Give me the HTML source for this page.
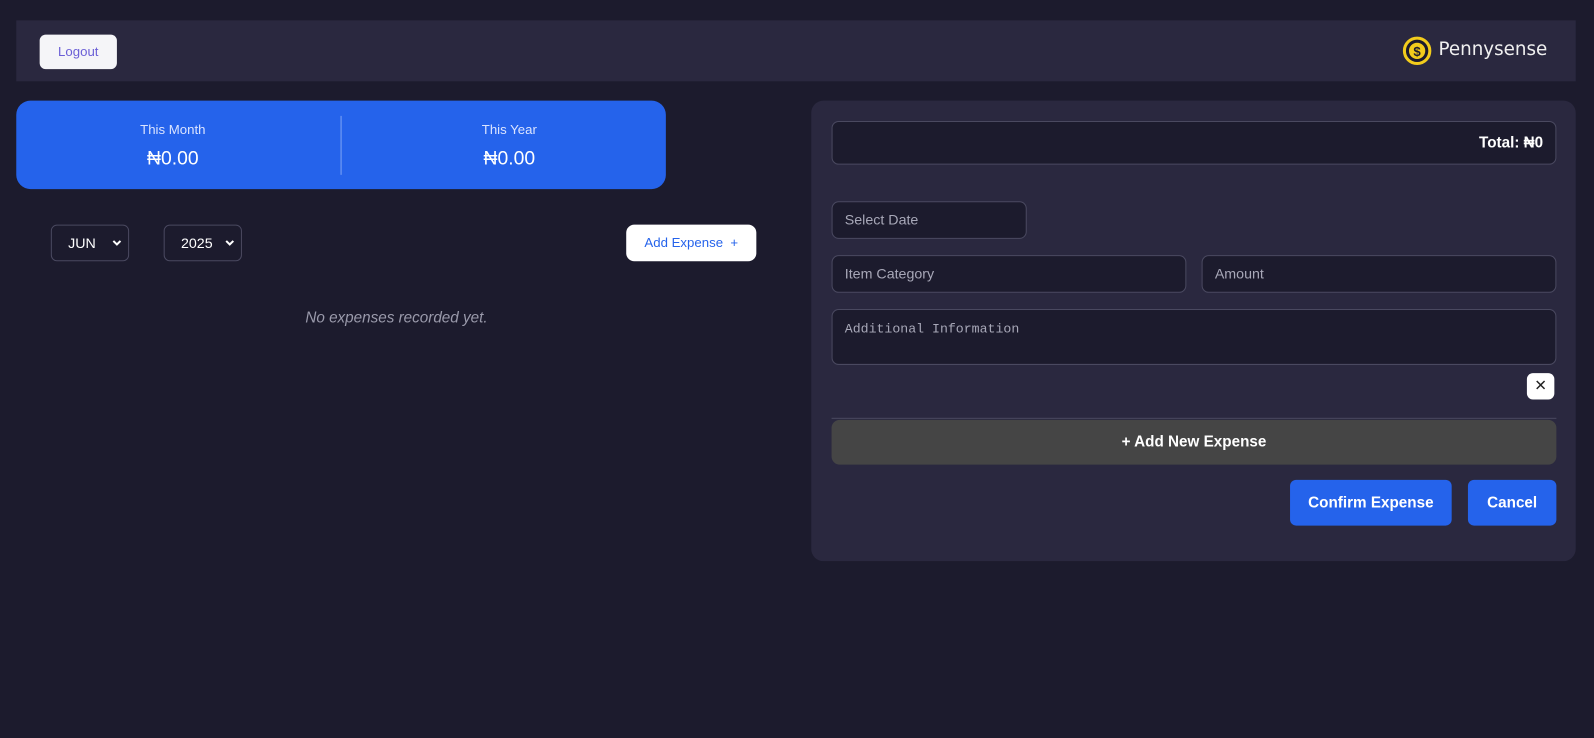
<!DOCTYPE html>
<html><head><meta charset="utf-8"><style>
*{box-sizing:border-box;margin:0;padding:0}
body{width:1594px;height:738px;background:#1c1b2d;font-family:"Liberation Sans","DejaVu Sans",sans-serif;overflow:hidden;color:#fff}
#w{position:relative;width:1568px;height:726px;transform:scale(1.01658);transform-origin:0 0}
.abs{position:absolute}
.hdr{left:16px;top:20px;width:1534px;height:60px;background:#2a283f}
.logout{left:39px;top:34px;width:76px;height:34px;background:#f5f5f8;border-radius:6px;color:#6b5fd6;font-size:13px;text-align:center;line-height:34px}
.card{left:16px;top:99px;width:639px;height:87px;background:#2563eb;border-radius:14px}
.lbl{font-size:13px;color:#dbe4ff;text-align:center;width:320px}
.val{font-size:19px;text-align:center;width:320px}
.sel{height:36px;border:1px solid #4a4960;border-radius:6px;font-size:14px;line-height:34px;padding-left:16px}
.chev{position:absolute;right:6px;top:13px}
.addb{left:616px;top:221px;width:128px;height:36px;background:#fff;border-radius:8px;color:#2563eb;font-size:13px;line-height:36px;text-align:center}
.panel{left:798px;top:99px;width:752px;height:453px;background:#2a283f;border-radius:12px}
.inp{background:#1c1b2d;border:1px solid #4a4960;border-radius:7px;color:#a8a8b8;font-size:14px;padding-left:12px}
.btn{background:#2563eb;border-radius:6px;font-weight:bold;font-size:15px;text-align:center;line-height:45px}
</style></head><body><div id="w">
<div class="abs hdr"></div>
<div class="abs logout">Logout</div>
<svg class="abs" style="left:1379px;top:35px" width="30" height="30" viewBox="0 0 30 30"><circle cx="15" cy="15" r="12.5" fill="#1c1b2d" stroke="#f2cc1c" stroke-width="3"/><circle cx="15" cy="15" r="8" fill="#f2cc1c"/><text x="15" y="20" text-anchor="middle" font-size="13" font-weight="bold" fill="#1c1b2d" font-family="Liberation Sans">$</text></svg>
<div class="abs" style="left:1415px;top:38px;font-size:18px;color:#f0f0f0;font-family:'DejaVu Sans',sans-serif">Pennysense</div>
<div class="abs card"></div>
<div class="abs" style="left:335px;top:114px;width:1px;height:58px;background:#7ea4f5"></div>
<div class="abs lbl" style="left:10px;top:120px">This Month</div>
<div class="abs val" style="left:10px;top:146px">₦0.00</div>
<div class="abs lbl" style="left:341px;top:120px">This Year</div>
<div class="abs val" style="left:341px;top:146px">₦0.00</div>
<div class="abs sel" style="left:50px;top:221px;width:77px">JUN <svg class="chev" width="10" height="8" viewBox="0 0 10 8"><path d="M1.5 2 L5 5.5 L8.5 2" stroke="#fff" stroke-width="2" fill="none"/></svg></div>
<div class="abs sel" style="left:161px;top:221px;width:77px">2025 <svg class="chev" width="10" height="8" viewBox="0 0 10 8"><path d="M1.5 2 L5 5.5 L8.5 2" stroke="#fff" stroke-width="2" fill="none"/></svg></div>
<div class="abs addb">Add Expense &nbsp;+</div>
<div class="abs" style="left:0;width:780px;top:304px;text-align:center;font-style:italic;color:#9a9aab;font-size:15px">No expenses recorded yet.</div>
<div class="abs panel"></div>
<div class="abs inp" style="left:818px;top:119px;width:713px;height:43px;color:#fff;font-weight:bold;font-size:15px;text-align:right;padding-right:12px;line-height:41px">Total: ₦0</div>
<div class="abs inp" style="left:818px;top:198px;width:192px;height:37px;line-height:35px">Select Date</div>
<div class="abs inp" style="left:818px;top:251px;width:349px;height:37px;line-height:35px">Item Category</div>
<div class="abs inp" style="left:1182px;top:251px;width:349px;height:37px;line-height:35px">Amount</div>
<div class="abs inp" style="left:818px;top:304px;width:713px;height:55px;padding-top:11px;font-family:'Liberation Mono',monospace;font-size:13px">Additional Information</div>
<div class="abs" style="left:1502px;top:367px;width:27px;height:26px;background:#fff;border-radius:6px;color:#222;text-align:center;line-height:26px;font-size:15px">✕</div>
<div class="abs" style="left:818px;top:411px;width:713px;height:1px;background:#4a4960"></div>
<div class="abs" style="left:818px;top:413px;width:713px;height:44px;background:#454545;border-radius:8px;text-align:center;line-height:44px;font-weight:bold;font-size:15px">+ Add New Expense</div>
<div class="abs btn" style="left:1269px;top:472px;width:159px;height:45px">Confirm Expense</div>
<div class="abs btn" style="left:1444px;top:472px;width:87px;height:45px">Cancel</div>
</div></body></html>
